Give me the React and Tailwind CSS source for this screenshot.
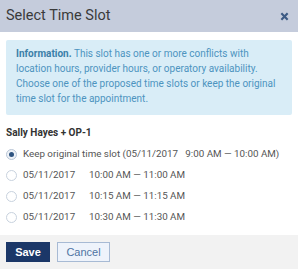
export default function App() {
  const rows = [
    ["10:00 AM — 11:00 AM"],
    ["10:15 AM — 11:15 AM"],
    ["10:30 AM — 11:30 AM"],
  ];
  return (
    <div className="w-[298px] h-[269px] bg-white flex flex-col overflow-hidden" style={{ fontFamily: "Roboto, 'Liberation Sans', sans-serif" }}>
      <div className="h-[32px] bg-[#c5ccdc] flex items-center justify-between pl-[6px] pr-[9px] shrink-0">
        <span className="text-[14.5px] text-[#3a3a3a]">Select Time Slot</span>
        <svg width="9" height="9" viewBox="0 0 10 10">
          <path d="M1.5 1.5 L8.5 8.5 M8.5 1.5 L1.5 8.5" stroke="#3d5b85" strokeWidth="2.4" strokeLinecap="butt" />
        </svg>
      </div>
      <div className="flex-1 px-[6px] pt-[8px]">
        <div className="bg-[#d9edf7] rounded-[2px] pl-[10px] pr-[10px] pt-[6px] pb-[9px] text-[10px] leading-[15px] text-[#4d94bf]">
          <span className="font-bold text-[#3b7fa8]">Information.</span> This slot has one or more conflicts with location hours, provider hours, or operatory availability. Choose one of the proposed time slots or keep the original time slot for the appointment.
        </div>
        <div className="mt-[11px] text-[10px] font-bold text-[#333] leading-[14px]">Sally Hayes + OP-1</div>
        <div className="mt-[4px] flex flex-col">
          <div className="h-[21px] flex items-center gap-[6px] text-[9.8px] text-[#555]">
            <span className="w-[11px] h-[11px] rounded-full border border-[#b9c6d6] bg-[#eef2f7] flex items-center justify-center">
              <span className="w-[5px] h-[5px] rounded-full bg-[#2f5480]" />
            </span>
            <span className="whitespace-pre">Keep original time slot (05/11/2017   9:00 AM — 10:00 AM)</span>
          </div>
          {rows.map(([t]) => (
            <div key={t} className="h-[21px] flex items-center gap-[6px] text-[9.8px] text-[#555]">
              <span className="w-[11px] h-[11px] rounded-full border border-[#c8d2de] bg-white" />
              <span className="w-[60px]">05/11/2017</span>
              <span>{t}</span>
            </div>
          ))}
        </div>
      </div>
      <div className="h-[34px] bg-[#f2f2f2] flex items-center gap-[7px] px-[6px] shrink-0" style={{ fontFamily: "'Liberation Sans', Arial, sans-serif" }}>
        <button className="w-[44px] h-[20px] bg-[#1b3768] text-white text-[11px] font-bold">Save</button>
        <button className="w-[53px] h-[20px] bg-[#eef3fb] border border-[#a7bad4] text-[#4f73a3] text-[11px]">Cancel</button>
      </div>
    </div>
  );
}
